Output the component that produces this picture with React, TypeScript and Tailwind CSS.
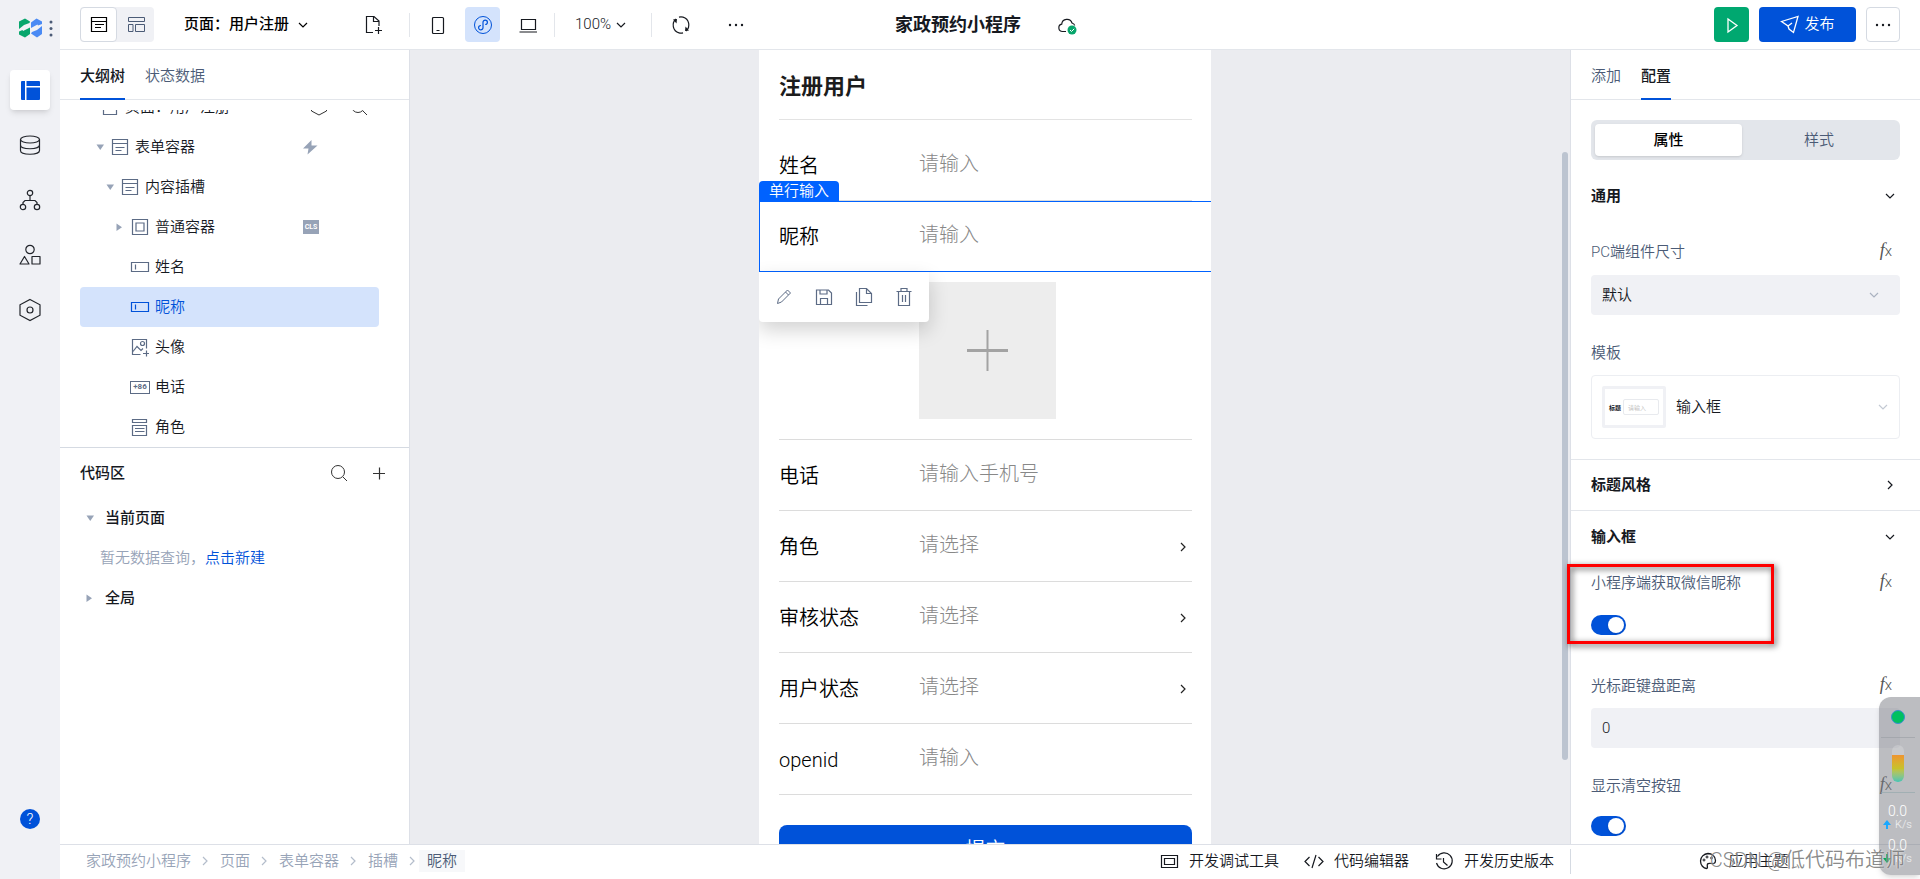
import React, { type ReactNode } from "react";

type IconProps = { className?: string };

function Svg({ size = 20, className, children }: { size?: number; className?: string; children: ReactNode }) {
  return (
    <svg
      width={size}
      height={size}
      viewBox={`0 0 ${size} ${size}`}
      fill="none"
      stroke="currentColor"
      className={"shrink-0 " + (className ?? "")}
      aria-hidden="true"
    >
      {children}
    </svg>
  );
}

const Chevron = ({ className }: IconProps) => (
  <Svg size={12} className={className}>
    <path d="M2 4l4 4 4-4" strokeWidth="1.2" />
  </Svg>
);
const ChevronRight = ({ className }: IconProps) => (
  <Svg size={12} className={className}>
    <path d="M4 2l4 4-4 4" strokeWidth="1.2" />
  </Svg>
);
const FormIcon = ({ className }: IconProps) => (
  <Svg className={className}>
    <path d="M2.5 2.5h15v15h-15zM2.5 6.5h15M5.5 10.5h9M5.5 13.5h6" strokeWidth="1.2" />
  </Svg>
);
const BoxIcon = () => (
  <Svg>
    <path d="M2.5 2.5h15v15h-15zM6 6h8v8H6z" strokeWidth="1.2" />
  </Svg>
);
const InputIcon = () => (
  <Svg>
    <path d="M1.5 5.5h17v9h-17zM5.5 7.5v5" strokeWidth="1.2" />
  </Svg>
);
const ImageIcon = () => (
  <Svg>
    <path d="M10.5 17.5h-8v-15h14v9" strokeWidth="1.2" />
    <path d="M3 14.5l4-5 4 4 2-2" strokeWidth="1.2" />
    <circle cx="12.500" cy="6.500" r="2" strokeWidth="1.2" />
    <path d="M13 16.500h6M16.500 13.500v6" strokeWidth="1.2" />
  </Svg>
);
const PhoneInputIcon = () => (
  <span className="flex h-[13px] w-5 items-center justify-center border border-current font-[Roboto] text-[8px] leading-none font-bold">
    +86
  </span>
);
const ListIcon = () => (
  <Svg>
    <path d="M2.500 2.500h14v3h-14zM2.500 8.500h14v10h-14zM5 11.500h9.500M5 14.500h9.500" strokeWidth="1.2" />
  </Svg>
);
const PageIcon = () => (
  <Svg>
    <path d="M3.500 2.500h13v15h-13z" strokeWidth="1.2" />
  </Svg>
);
const SearchIcon = () => (
  <Svg>
    <circle cx="9" cy="9" r="6.500" />
    <path d="M14 14l4 4" />
  </Svg>
);

function Caret({ open }: { open?: boolean }) {
  return (
    <svg width="8" height="8" viewBox="0 0 8 8" className="fill-[#97a3b7]" aria-hidden="true">
      {open ? <path d="M.5 1.500H8L4.250 7z" /> : <path d="M.5 .5V8L6 4.250z" />}
    </svg>
  );
}

const TREE: { label: string; pad: string; icon: ReactNode; caret?: "open" | "closed"; active?: boolean; extra?: ReactNode }[] = [
  {
    label: "页面：用户注册",
    pad: "pl-0",
    icon: <PageIcon />,
    extra: (
      <span className="flex gap-5 pr-2.5 text-[#333]">
        <Svg>
          <path d="M10 1.500l7.500 4v8.500l-7.500 4-7.500-4V5.500z" />
        </Svg>
        <SearchIcon />
      </span>
    ),
  },
  {
    label: "表单容器",
    pad: "pl-2.5",
    icon: <FormIcon />,
    caret: "open",
    extra: (
      <svg width="20" height="20" viewBox="0 0 20 20" className="mr-[59px] fill-[#97a3b7]" aria-hidden="true">
        <path d="M11.500 3L3 11.500h5.500L7.500 17.500 17.500 8.500h-6z" />
      </svg>
    ),
  },
  { label: "内容插槽", pad: "pl-5", icon: <FormIcon />, caret: "open" },
  {
    label: "普通容器",
    pad: "pl-[30px]",
    icon: <BoxIcon />,
    caret: "closed",
    extra: (
      <span className="mr-[60px] flex h-3.5 w-4 items-center justify-center bg-[#97a3b7] font-[Roboto] text-[7px] font-bold text-white">
        CLS
      </span>
    ),
  },
  { label: "姓名", pad: "pl-[30px]", icon: <InputIcon /> },
  { label: "昵称", pad: "pl-[30px]", icon: <InputIcon />, active: true },
  { label: "头像", pad: "pl-[30px]", icon: <ImageIcon /> },
  { label: "电话", pad: "pl-[30px]", icon: <PhoneInputIcon /> },
  { label: "角色", pad: "pl-[30px]", icon: <ListIcon /> },
];

function Rail() {
  const item = "flex size-10 items-center justify-center rounded text-[#22252b]";
  return (
    <nav className="flex w-[60px] shrink-0 flex-col items-center bg-[#f0f1f5]" aria-label="主导航">
      <div className="flex h-[55px] w-full items-center pl-[19px]">
        <svg width="24" height="20" viewBox="0 0 24 20" aria-hidden="true">
          <path d="M0 3.500L6 .5l5 3-.5 1.500L5 7 0 11z" fill="#07a66c" />
          <path d="M0 13.500L3.500 12l.5 1 7-3.500V16l-5 3.500-6-3z" fill="#07a66c" />
          <path d="M12 4.500L17.500 .5 23 3.500V6l-4 1.500-.5-1L12 10z" fill="#4a8af4" />
          <path d="M12 15.500l1-1.500 5-2 5-4v8l-5 3.500z" fill="#4a8af4" />
        </svg>
        <svg width="4" height="18" viewBox="0 0 4 18" className="ml-1.5 fill-[#4b5b76]" aria-hidden="true">
          <circle cx="2" cy="3" r="1.500" />
          <circle cx="2" cy="9.500" r="1.500" />
          <circle cx="2" cy="16" r="1.500" />
        </svg>
      </div>
      <div className="mt-[15px] flex flex-col gap-[15px]">
        <button className={item + " bg-white shadow-md"} aria-label="页面">
          <svg width="20" height="20" viewBox="0 0 20 20" fill="#0052d9" aria-hidden="true">
            <path d="M1 2a1 1 0 011-1h3v19H2a1 1 0 01-1-1zM6.500 1H19a1 1 0 011 1v4H6.500zM6.500 7.500H20V19a1 1 0 01-1 1H6.500z" />
          </svg>
        </button>
        <button className={item} aria-label="数据">
          <Svg size={22}>
            <ellipse cx="11" cy="5.500" rx="9.500" ry="3.500" strokeWidth="1.200" />
            <path d="M1.500 5.500v11c0 5 19 5 19 0v-11M1.500 11c0 5 19 5 19 0" strokeWidth="1.200" />
          </Svg>
        </button>
        <button className={item} aria-label="流程">
          <Svg size={22}>
            <circle cx="11" cy="4" r="2.700" strokeWidth="1.200" />
            <circle cx="4" cy="18" r="2.700" strokeWidth="1.200" />
            <circle cx="18" cy="18" r="2.700" strokeWidth="1.200" />
            <path d="M11 7v4.500M4 15v-1.500l2-2h10l2 2V15" strokeWidth="1.200" />
          </Svg>
        </button>
        <button className={item} aria-label="组件">
          <Svg size={22}>
            <circle cx="11" cy="5.500" r="4.200" strokeWidth="1.200" />
            <path d="M5.500 12.500L10 20H1zM13 12.500h8V20h-8z" strokeWidth="1.200" strokeLinejoin="round" />
          </Svg>
        </button>
        <button className={item} aria-label="设置">
          <Svg size={24}>
            <path d="M12 1.500l10 5.300v10.400l-10 5.300-10-5.300V6.800z" strokeWidth="1.200" />
            <circle cx="12" cy="12" r="3" strokeWidth="1.200" />
          </Svg>
        </button>
      </div>
      <button
        className="mt-auto mb-[50px] flex size-5 items-center justify-center rounded-full bg-[#0052d9] text-[15px] leading-none text-white"
        aria-label="帮助"
      >
        ?
      </button>
    </nav>
  );
}

function Header() {
  const btn = "flex size-[35px] items-center justify-center rounded";
  const ink = " text-[#16191f]";
  const sep = "h-6 w-px bg-[#e3e6eb]";
  return (
    <header className="flex h-[50px] shrink-0 items-center border-b border-[#e3e6eb] bg-white px-5">
      <div className="flex flex-1 items-center">
        <div className="flex rounded bg-[#f0f1f5]">
          <button className="flex h-[35px] w-[37px] items-center justify-center rounded border border-[#d5dae2] bg-white" aria-label="编辑">
            <Svg>
              <path d="M2.500 2.500h15v14h-15zM2.500 6.500h15M6 9.500h9M6 12.500h6" strokeWidth="1.200" />
            </Svg>
          </button>
          <button className="flex h-[35px] w-[37px] items-center justify-center text-[#4b5b76]" aria-label="布局">
            <Svg>
              <path d="M2.500 2.500h16v4h-16zM2.500 9.500h4.500v7h-4.500zM9.500 9.500h9v7h-9z" />
            </Svg>
          </button>
        </div>
        <button className="ml-[30px] flex items-center gap-2 text-[15px] font-medium text-black">
          页面：用户注册
          <Chevron />
        </button>
        <button className={btn + ink + " ml-[47px]"} aria-label="新建页面">
          <Svg>
            <path d="M9 17.500H2.500v-16h7.500l5 4.500v5M9.500 1.500V6.500H15M11 15.500h7M14.500 12v7" strokeWidth="1.200" />
          </Svg>
        </button>
        <span className={sep + " ml-[18px]"} />
        <button className={btn + ink + " ml-2.5"} aria-label="手机">
          <Svg>
            <rect x="4.500" y="2.500" width="11" height="16" rx="1" strokeWidth="1.200" />
            <path d="M8.500 15.500h3" />
          </Svg>
        </button>
        <button className={btn + " ml-2.5 bg-[#d4e3fc] text-[#0052d9]"} aria-label="小程序">
          <Svg>
            <circle cx="10" cy="10" r="8.500" />
            <path d="M8 10.500a2.200 2.200 0 10 2 2.200V7.300a2.200 2.200 0 112.200 2.200" strokeWidth="1.200" />
          </Svg>
        </button>
        <button className={btn + ink + " ml-2.5"} aria-label="电脑">
          <Svg>
            <path d="M3.500 4.500h14v10h-14zM1.500 17h17.500" strokeWidth="1.200" />
          </Svg>
        </button>
        <span className={sep + " ml-[9px]"} />
        <button className="ml-5 flex items-center gap-1 text-[15px] text-[#16191f]">
          100%
          <Chevron />
        </button>
        <span className={sep + " ml-6"} />
        <button className={btn + ink + " ml-[11px]"} aria-label="刷新">
          <Svg>
            <path d="M5 4a8 8 0 0 0 3 13.800M15 16A8 8 0 0 0 12 2.200" strokeWidth="1.200" />
            <path d="M8 2.200a8 8 0 0 1 4 0M12 17.800a8 8 0 0 1-4 0" strokeWidth="1.200" />
            <path d="M2 4.500l4-.5-.5 4.500zM18 15.500l-4 .5.5-4.500z" fill="currentColor" stroke="none" />
          </Svg>
        </button>
        <button className={btn + ink + " ml-5"} aria-label="更多">
          <Dots />
        </button>
      </div>
      <div className="flex items-center">
        <h1 className="text-lg font-bold text-[#16191f]">家政预约小程序</h1>
        <span className="ml-7 flex size-9 items-center justify-center text-[#16191f]">
          <Svg>
            <path d="M9 16.500H5.500a3.700 3.700 0 01-.8-7.300 5.300 5.300 0 0110.300-1.200c1.500.5 2.500 1.500 2.700 2.500" strokeWidth="1.200" />
            <circle cx="15" cy="15" r="4.500" fill="#07a66c" stroke="none" />
            <path d="M13 15l1.500 1.500 2.700-2.700" stroke="#fff" />
          </Svg>
        </span>
      </div>
      <div className="flex flex-1 items-center justify-end gap-2.5">
        <button className="flex size-[35px] items-center justify-center rounded bg-[#00a870] text-white" aria-label="预览">
          <Svg>
            <path d="M6 4l9 6.500L6 17z" strokeWidth="1.300" />
          </Svg>
        </button>
        <button className="flex h-[35px] w-[97px] items-center justify-center gap-1 rounded bg-[#0052d9] text-[15px] text-white">
          <Svg>
            <path d="M1.500 6.500l16.500-5-4.500 16-4.500-3.500-1-3zM8 11l4-3" strokeWidth="1.300" />
          </Svg>
          发布
        </button>
        <button className="flex h-[35px] w-[34px] items-center justify-center rounded border border-[#d5dae2]" aria-label="更多操作">
          <Dots />
        </button>
      </div>
    </header>
  );
}

function Dots() {
  return (
    <svg width="18" height="4" viewBox="0 0 18 4" fill="#16191f" aria-hidden="true">
      <circle cx="3" cy="2" r="1.200" />
      <circle cx="9" cy="2" r="1.200" />
      <circle cx="15" cy="2" r="1.200" />
    </svg>
  );
}

function Tabs({ items, active }: { items: string[]; active: string }) {
  return (
    <div role="tablist" className="flex h-[50px] shrink-0 gap-5 border-b border-[#e3e6eb] px-5 text-[15px]">
      {items.map((t) => (
        <button
          key={t}
          role="tab"
          aria-selected={t === active}
          className={
            t === active
              ? "-mb-px border-b-2 border-[#0052d9] pt-1 font-medium text-[#16191f]"
              : "-mb-px border-b-2 border-transparent pt-1 text-[#4b5b76]"
          }
        >
          {t}
        </button>
      ))}
    </div>
  );
}

function LeftPanel() {
  return (
    <aside className="flex w-[350px] shrink-0 flex-col border-r border-[#dde0e7] bg-white text-[15px] text-[#16191f]">
      <Tabs items={["大纲树", "状态数据"]} active="大纲树" />
      <div className="mt-2.5 h-[337px] shrink-0 overflow-hidden">
        <ul className="-mt-[23px] pr-[30px] pl-5">
          {TREE.map((n) => (
            <li key={n.label} className={"flex h-10 items-center rounded " + n.pad + (n.active ? " bg-[#d4e3fc] text-[#0052d9]" : "")}>
              <span className="flex w-5 shrink-0 justify-center">{n.caret && <Caret open={n.caret === "open"} />}</span>
              <span className={"flex w-5 justify-center " + (n.active ? "" : "text-[#5c6b85]")}>{n.icon}</span>
              <span className="ml-[5px] flex-1">{n.label}</span>
              {n.extra}
            </li>
          ))}
        </ul>
      </div>
      <section className="flex-1 border-t border-[#d5dae2]">
        <div className="flex h-[50px] items-center pr-5 pl-5">
          <h2 className="flex-1 font-medium">代码区</h2>
          <button className="text-[#333]" aria-label="搜索">
            <SearchIcon />
          </button>
          <button className="ml-5 text-[#333]" aria-label="新增">
            <Svg>
              <path d="M4 10.500h12M10.500 4.500v12" strokeWidth="1.200" />
            </Svg>
          </button>
        </div>
        <div className="flex h-10 items-center pl-[26px] font-medium">
          <Caret open />
          <span className="ml-[11px]">当前页面</span>
        </div>
        <p className="flex h-10 items-center pl-10 text-[#97a3b7]">
          暂无数据查询，
          <a href="#new" className="text-[#0052d9]">
            点击新建
          </a>
        </p>
        <div className="flex h-10 items-center pl-[26px] font-medium">
          <Caret />
          <span className="ml-[11px]">全局</span>
        </div>
      </section>
    </aside>
  );
}

function FormRow({ id, label, hint, select }: { id: string; label: string; hint: string; select?: boolean }) {
  const field = "h-full w-full min-w-0 appearance-none bg-transparent pb-[3px] font-light outline-none";
  return (
    <div className="flex h-[71px] items-center border-b border-[#dcdcdc] pt-px">
      <label htmlFor={id} className="w-[140px] shrink-0 text-black">
        {label}
      </label>
      {select ? (
        <div className="flex h-full flex-1 items-center">
          <select id={id} className={field + " text-[#888]"}>
            <option>{hint}</option>
          </select>
          <ChevronRight className="mr-[3px] text-[#222]" />
        </div>
      ) : (
        <input id={id} placeholder={hint} className={field + " placeholder:text-[#888]"} />
      )}
    </div>
  );
}

function Canvas() {
  return (
    <main className="relative flex min-w-0 flex-1 justify-center overflow-hidden bg-[#ebecf0] pr-2.5">
      <form className="h-full w-[452px] overflow-hidden bg-white pr-[19px] pl-5 text-xl">
        <h2 className="flex h-[70px] items-center border-b border-[#e3e3e3] pt-1.5 text-[22px] font-bold text-[#1c1c1c]">注册用户</h2>
        <div className="h-2.5" />
        <FormRow id="name" label="姓名" hint="请输入" />
        <div className="relative">
          <FormRow id="nick" label="昵称" hint="请输入" />
          <div className="pointer-events-none absolute inset-y-0 -right-5 -left-5 border border-r-0 border-[#0062ff]" />
          <span className="absolute bottom-full -left-5 flex h-5 w-20 items-center justify-center rounded-t bg-[#0062ff] text-[15px] text-white">
            单行输入
          </span>
          <div className="absolute top-full -left-5 flex h-[50px] w-[170px] items-center gap-5 rounded-b bg-white pl-[15px] text-[#5c6b85] shadow-[0_8px_20px_rgba(0,0,0,0.18)]">
            <button type="button" aria-label="编辑">
              <Svg>
                <path d="M3.500 16.500l1-4.500 9-9 3 3-9 9zM11.500 5l3 3" />
              </Svg>
            </button>
            <button type="button" aria-label="保存">
              <Svg>
                <path d="M2.500 3h12l3 3v11.500h-15zM6 3v4h7V3M6.500 17.500v-6h7v6" strokeWidth="1.200" />
              </Svg>
            </button>
            <button type="button" aria-label="复制">
              <Svg>
                <path d="M5.500 1.500h7l5 5v9h-12zM12.500 1.500v5h5M2.500 5v13.500h11" strokeWidth="1.200" />
              </Svg>
            </button>
            <button type="button" aria-label="删除">
              <Svg>
                <path d="M2.500 4.500h15M7 4.500v-3h6v3M4.500 4.500v14h11v-14M8.500 8v7M11.500 8v7" strokeWidth="1.200" />
              </Svg>
            </button>
          </div>
        </div>
        <div className="flex justify-start border-b border-[#dcdcdc] pt-2.5 pb-5 pl-[140px]">
          <button type="button" className="flex size-[137px] items-center justify-center bg-[#ededed] text-[#a3a3a3]" aria-label="上传头像">
            <Svg size={41}>
              <path d="M0 20.500h41" strokeWidth="3" />
              <path d="M20.500 0v41" strokeWidth="2" />
            </Svg>
          </button>
        </div>
        <FormRow id="phone" label="电话" hint="请输入手机号" />
        <FormRow id="role" label="角色" hint="请选择" select />
        <FormRow id="audit" label="审核状态" hint="请选择" select />
        <FormRow id="ustate" label="用户状态" hint="请选择" select />
        <FormRow id="openid" label="openid" hint="请输入" />
        <button type="button" className="mt-[30px] h-[50px] w-full rounded-lg bg-[#0052d9] text-white">
          提交
        </button>
      </form>
      <div className="absolute top-[102px] right-[2px] h-[608px] w-1.5 rounded-full bg-[#bcc4d0]" />
    </main>
  );
}

function FxButton() {
  return (
    <button className="mr-2 flex items-baseline pb-1 text-[#555]" aria-label="绑定表达式">
      <i className="font-['Liberation_Serif'] text-lg leading-5">f</i>
      <span className="font-[Roboto] text-[15px] leading-5 font-light">x</span>
    </button>
  );
}

function FieldLabel({ id, children, fx = true }: { id: string; children: ReactNode; fx?: boolean }) {
  return (
    <div className="flex h-10 items-center justify-between text-[#4b5b76]">
      <label htmlFor={id}>{children}</label>
      {fx && <FxButton />}
    </div>
  );
}

function Toggle({ id }: { id: string }) {
  return (
    <input
      id={id}
      type="checkbox"
      role="switch"
      defaultChecked
      className="relative block h-5 w-[35px] appearance-none rounded-full bg-[#0052d9] before:absolute before:top-0.5 before:right-0.5 before:size-4 before:rounded-full before:bg-white before:shadow"
    />
  );
}

function RightPanel() {
  return (
    <aside className="relative flex w-[350px] shrink-0 flex-col border-l border-[#dde0e7] bg-white text-[15px] text-[#16191f]">
      <Tabs items={["添加", "配置"]} active="配置" />
      <div className="min-h-0 flex-1 overflow-hidden">
        <div className="px-5 pt-5">
          <div className="flex h-10 rounded-md bg-[#e3e6eb] p-1">
            <button className="w-[147px] rounded-sm bg-white font-medium text-black shadow-sm">属性</button>
            <button className="flex-1 text-[#4b5b76]">样式</button>
          </div>
          <div className="flex h-[72px] items-center justify-between pr-1">
            <h3 className="font-bold">通用</h3>
            <Chevron />
          </div>
          <FieldLabel id="size">PC端组件尺寸</FieldLabel>
          <div className="mt-[3px] flex h-10 items-center rounded bg-[#f0f1f5]">
            <select id="size" className="h-full flex-1 appearance-none bg-transparent pl-[11px] outline-none">
              <option>默认</option>
            </select>
            <Chevron className="mr-5 text-[#aab2c0]" />
          </div>
          <div className="mt-[18px]">
            <FieldLabel id="tpl" fx={false}>
              模板
            </FieldLabel>
          </div>
          <button id="tpl" className="mt-0.5 flex h-16 w-full items-center rounded border border-[#eceef2] pr-2.5 pl-2.5">
            <span className="flex h-[42px] w-16 items-center justify-center gap-0.5 rounded-xs border-3 border-[#f0f1f5] text-[6px]">
              <b>标题</b>
              <span className="flex h-4 w-9 items-center rounded-xs border border-[#e8eaee] pl-1 text-[#bbb]">请输入</span>
            </span>
            <span className="ml-2.5 flex-1 text-left">输入框</span>
            <Chevron className="text-[#c3c9d3]" />
          </button>
        </div>
        <div className="mt-5 flex h-[52px] items-center justify-between border-y border-[#e3e6eb] pr-6 pl-5">
          <h3 className="font-bold">标题风格</h3>
          <ChevronRight />
        </div>
        <div className="flex h-[52px] items-center justify-between pr-6 pl-5">
          <h3 className="font-bold">输入框</h3>
          <Chevron />
        </div>
        <div className="px-5">
          <FieldLabel id="wxnick">小程序端获取微信昵称</FieldLabel>
          <div className="pt-3 pb-[31px]">
            <Toggle id="wxnick" />
          </div>
          <FieldLabel id="cursor">光标距键盘距离</FieldLabel>
          <input id="cursor" defaultValue="0" className="mt-0.5 mb-[18px] block h-10 w-full rounded bg-[#f0f1f5] px-[11px] outline-none" />
          <FieldLabel id="clear">显示清空按钮</FieldLabel>
          <div className="pt-2.5">
            <Toggle id="clear" />
          </div>
        </div>
      </div>
      <div className="pointer-events-none absolute top-[514px] -left-1 z-10 h-20 w-[207px] border-3 border-[#fe0000] drop-shadow-[2px_2px_3px_rgba(0,0,0,0.7)]" />
    </aside>
  );
}

function Footer() {
  const crumbs = ["家政预约小程序", "页面", "表单容器", "插槽"];
  const tool = "flex items-center gap-2.5";
  return (
    <footer className="flex h-[35px] shrink-0 items-center border-t border-[#dde0e7] bg-white pb-0.5 text-[15px] text-[#16191f]">
      <nav className="flex flex-1 items-center gap-[9px] pl-[26px] text-[#97a3b7]" aria-label="面包屑">
        {crumbs.map((c) => (
          <span key={c} className="flex items-center gap-2">
            <a href="#crumb">{c}</a>
            <ChevronRight className="text-[#b4bdcb]" />
          </span>
        ))}
        <span className="-ml-2 bg-[#f7f8fa] px-2 text-[#4b5b76]">昵称</span>
      </nav>
      <div className="flex items-center gap-[25px] pr-4">
        <button className={tool}>
          <Svg>
            <path d="M2.500 4.500h16v12h-16zM5.500 7.500h10v6h-10z" strokeWidth="1.200" />
          </Svg>
          开发调试工具
        </button>
        <button className={tool}>
          <Svg>
            <path d="M5.500 6L1 10.500 5.500 15M14.500 6l4.500 4.500-4.500 4.500M12 4l-4 13" strokeWidth="1.200" />
          </Svg>
          代码编辑器
        </button>
        <button className={tool}>
          <Svg>
            <path d="M3.500 5.500A8 8 0 1 1 2.500 12M2.500 3v5h5M9.500 7v4l4 3.500" strokeWidth="1.200" />
          </Svg>
          开发历史版本
        </button>
      </div>
      <div className="flex h-[25px] w-[350px] items-center justify-center border-l border-[#d5dae2] pr-1">
        <button className={tool}>
          <Svg>
            <path d="M10 2.500a8 7.500 0 0 0-7.500 7.500c0 4 3 7.500 6 7.500 2 0 0-3 1-4.500 1.500-2 8 2 8-3.500 0-4-3.500-7-7.500-7z" strokeWidth="1.300" />
            <circle cx="6" cy="9" r="1" />
            <circle cx="9" cy="6" r="1" />
            <circle cx="13.500" cy="7" r="1" />
          </Svg>
          应用主题
        </button>
      </div>
    </footer>
  );
}

function NetMonitor() {
  return (
    <div className="absolute right-0 bottom-1 z-20 flex h-[178px] w-[41px] flex-col items-center rounded-l-xl bg-[#7a7c84]/50 pt-[13px] pr-1 text-white shadow-md">
      <span className="size-3.5 rounded-full border border-[#3a8fd0] bg-[#00c060]" />
      <span className="mt-[13px] h-px w-[34px] bg-[#999ca4]/60" />
      <span className="mt-[7px] flex h-[37px] w-3 flex-col justify-end overflow-hidden rounded-full bg-white/20">
        <span className="h-[27px] bg-linear-to-b from-[#ee9430] via-[#c6c22c] to-[#3fc4b4]" />
      </span>
      <span className="mt-2.5 h-px w-[34px] bg-[#8fa5aa]/60" />
      <span className="mt-2.5 text-[14px] leading-4">0.0</span>
      <span className="flex items-center gap-1 text-[11px] leading-[11px] text-white/80">
        <svg width="8" height="9" viewBox="0 0 8 9" fill="#1aa8ff" aria-hidden="true">
          <path d="M4 0l4 5H5v4H3V5H0z" />
        </svg>
        K/s
      </span>
      <span className="mt-[7px] text-[14px] leading-4">0.0</span>
      <span className="flex items-center gap-1 text-[11px] leading-[11px] text-white/80">
        <svg width="8" height="9" viewBox="0 0 8 9" fill="#00a050" aria-hidden="true">
          <path d="M4 9L0 4h3V0h2v4h3z" />
        </svg>
        K/s
      </span>
    </div>
  );
}

export default function App() {
  return (
    <div className="relative flex h-screen overflow-hidden bg-white font-[Roboto,'Noto_Sans_CJK_SC',sans-serif] font-[350]">
      <Rail />
      <div className="flex min-w-0 flex-1 flex-col">
        <Header />
        <div className="flex min-h-0 flex-1">
          <LeftPanel />
          <Canvas />
          <RightPanel />
        </div>
        <Footer />
      </div>
      <NetMonitor />
      <span className="pointer-events-none absolute right-[15px] bottom-1 z-30 text-[20px] leading-[30px] whitespace-nowrap text-[#6b6b6b]/80 [text-shadow:0_0_2px_#fff]">
        CSDN @低代码布道师
      </span>
    </div>
  );
}
